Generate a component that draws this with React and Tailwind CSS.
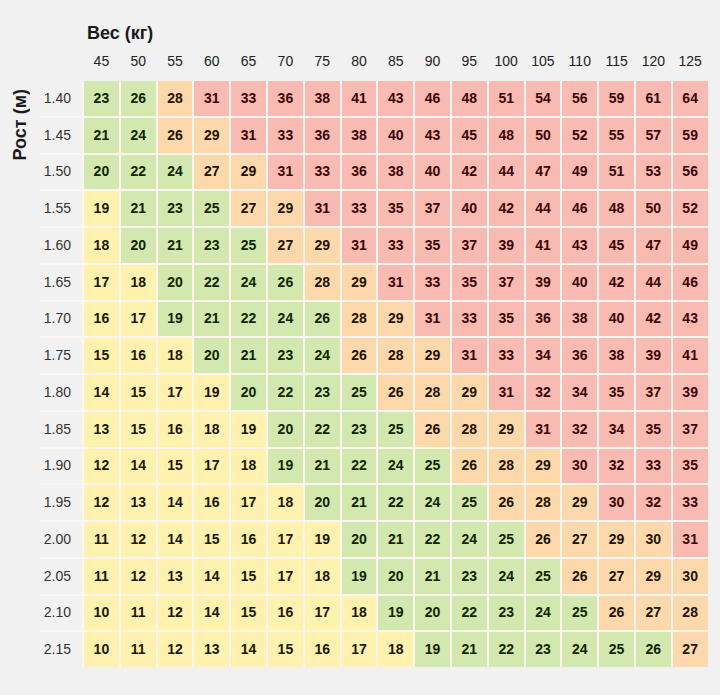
import React from 'react';

const weights = [45, 50, 55, 60, 65, 70, 75, 80, 85, 90, 95, 100, 105, 110, 115, 120, 125];

// each row: height label, values, colour codes (Y underweight, G normal, O overweight, R obese)
const rows = [
  ['1.40', '23 26 28 31 33 36 38 41 43 46 48 51 54 56 59 61 64', 'GGORRRRRRRRRRRRRR'],
  ['1.45', '21 24 26 29 31 33 36 38 40 43 45 48 50 52 55 57 59', 'GGOORRRRRRRRRRRRR'],
  ['1.50', '20 22 24 27 29 31 33 36 38 40 42 44 47 49 51 53 56', 'GGGOORRRRRRRRRRRR'],
  ['1.55', '19 21 23 25 27 29 31 33 35 37 40 42 44 46 48 50 52', 'YGGGOORRRRRRRRRRR'],
  ['1.60', '18 20 21 23 25 27 29 31 33 35 37 39 41 43 45 47 49', 'YGGGGOORRRRRRRRRR'],
  ['1.65', '17 18 20 22 24 26 28 29 31 33 35 37 39 40 42 44 46', 'YYGGGGOORRRRRRRRR'],
  ['1.70', '16 17 19 21 22 24 26 28 29 31 33 35 36 38 40 42 43', 'YYGGGGGOORRRRRRRR'],
  ['1.75', '15 16 18 20 21 23 24 26 28 29 31 33 34 36 38 39 41', 'YYYGGGGOOORRRRRRR'],
  ['1.80', '14 15 17 19 20 22 23 25 26 28 29 31 32 34 35 37 39', 'YYYYGGGGOOORRRRRR'],
  ['1.85', '13 15 16 18 19 20 22 23 25 26 28 29 31 32 34 35 37', 'YYYYYGGGGOOORRRRR'],
  ['1.90', '12 14 15 17 18 19 21 22 24 25 26 28 29 30 32 33 35', 'YYYYYGGGGGOOORRRR'],
  ['1.95', '12 13 14 16 17 18 20 21 22 24 25 26 28 29 30 32 33', 'YYYYYYGGGGGOOORRR'],
  ['2.00', '11 12 14 15 16 17 19 20 21 22 24 25 26 27 29 30 31', 'YYYYYYYGGGGGOOOOR'],
  ['2.05', '11 12 13 14 15 17 18 19 20 21 23 24 25 26 27 29 30', 'YYYYYYYGGGGGGOOOO'],
  ['2.10', '10 11 12 14 15 16 17 18 19 20 22 23 24 25 26 27 28', 'YYYYYYYYGGGGGGOOO'],
  ['2.15', '10 11 12 13 14 15 16 17 18 19 21 22 23 24 25 26 27', 'YYYYYYYYYGGGGGGGO'],
];

const tone = {
  Y: 'bg-[#fff2ae] text-[#1c1700]',
  G: 'bg-[#d3e8ae] text-[#0f2600]',
  O: 'bg-[#fdd8aa] text-[#221200]',
  R: 'bg-[#f9bab2] text-[#3a0606]',
};

const Cell = ({ value, code }) => (
  <div className={`flex items-center justify-center text-[14px] font-bold ${tone[code]}`}>
    {value}
  </div>
);

export default function App() {
  return (
    <div className="w-[720px] h-[695px] bg-[#f1f1f1] font-['Liberation_Sans',Arial,sans-serif] text-[#1a1a1a]">
      <div className="pt-[22px] pl-[87px] text-[18px] font-bold leading-[22px]">Вес (кг)</div>

      {/* weight scale */}
      <div className="mt-[7px] grid grid-cols-[82px_repeat(17,34.8px)] gap-x-[2px] h-[20px] items-center text-[14px] text-[#222]">
        <div />
        {weights.map((w) => (
          <div key={w} className="text-center">{w}</div>
        ))}
      </div>

      <div className="mt-[10px] flex items-start">
        <div className="w-[40px] flex items-start justify-center pt-[8px]">
          <div className="[writing-mode:vertical-rl] rotate-180 text-[18px] font-bold leading-[20px]">Рост (м)</div>
        </div>

        <div className="grid grid-cols-[42px_repeat(17,34.8px)] auto-rows-[34.75px] gap-[2px] bg-[#fbf7f0]">
          {rows.map(([h, vals, codes]) => (
            <React.Fragment key={h}>
              <div className="flex items-center justify-end pr-[11px] bg-[#f1f1f1] text-[14px] text-[#333]">{h}</div>
              {vals.split(' ').map((v, i) => (
                <Cell key={i} value={v} code={codes[i]} />
              ))}
            </React.Fragment>
          ))}
        </div>
      </div>
    </div>
  );
}
